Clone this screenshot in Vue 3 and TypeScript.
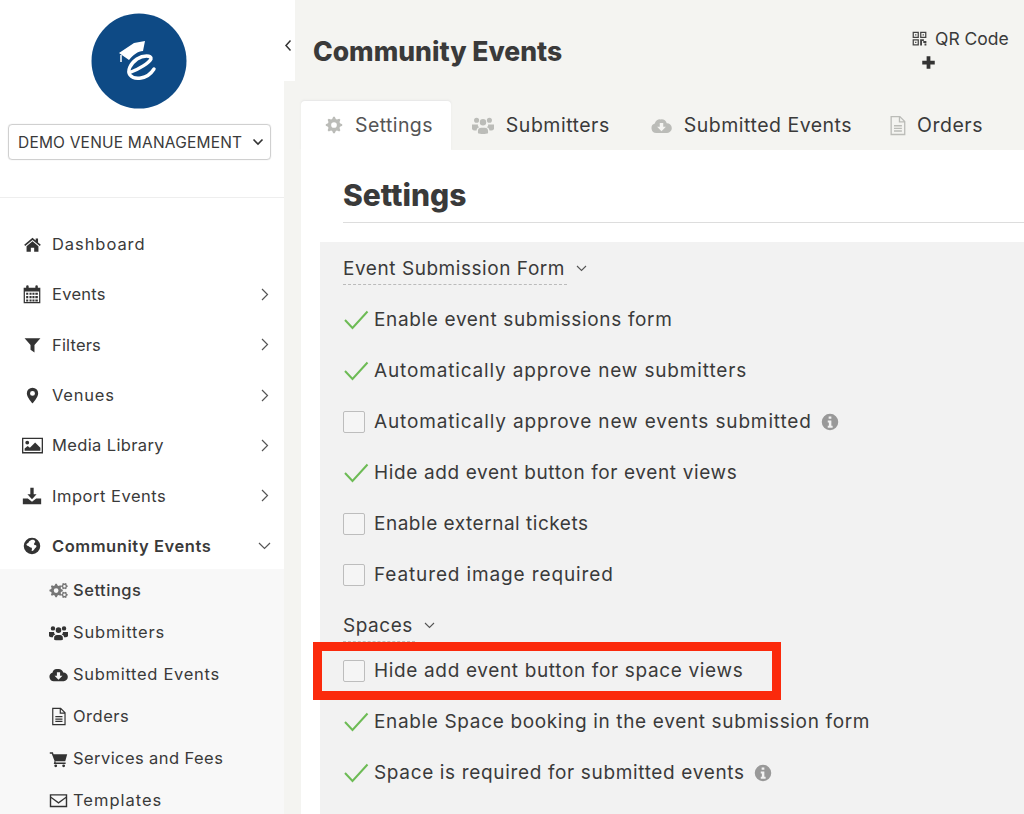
<script setup lang="ts">
function gear(cx: number, cy: number, r: number, hole: number, teeth = 8): string {
  let d = ''
  const n = teeth * 4
  for (let i = 0; i < n; i++) {
    const a = ((i - 0.5) / n) * Math.PI * 2
    const rr = i % 4 < 2 ? r : r * 0.76
    d += `${i ? 'L' : 'M'}${(cx + rr * Math.cos(a)).toFixed(2)} ${(cy + rr * Math.sin(a)).toFixed(2)}`
  }
  d += `ZM${cx - hole} ${cy}a${hole} ${hole} 0 1 0 ${hole * 2} 0a${hole} ${hole} 0 1 0 ${-hole * 2} 0Z`
  return d
}

const icons: Record<string, string> = {
  home: 'M12 3.500 1.500 12.300l1.300 1.500L12 6.200l9.200 7.600 1.300-1.500L19 9.400V4.500h-3v2.400ZM12 8 4.500 14.200V21h5.400v-4.800h4.200V21h5.400v-6.800Z',
  calendar:
    'M2 4.500h3V3a1.500 1.500 0 0 1 3 0v1.500h8V3a1.500 1.500 0 0 1 3 0v1.500h3V23H2ZM3.500 9v12.500h17V9ZM5 10.500h2.500v2.500H5Zm4 0h2.500v2.500H9Zm3.500 0H15v2.500h-2.500Zm3.500 0h3v2.500h-3ZM5 14.500h2.500V17H5Zm4 0h2.500V17H9Zm3.500 0H15V17h-2.500Zm3.500 0h3V17h-3ZM5 18.500h2.500V21H5Zm4 0h2.500V21H9Zm3.500 0H15V21h-2.500Zm3.500 0h3V21h-3Z',
  filter: 'M2 4h20l-7.500 8.500V22l-5-3.500v-6Z',
  pin: 'M12 1a8 8 0 0 0-8 8c0 5.500 8 14 8 14s8-8.500 8-14a8 8 0 0 0-8-8Zm0 4.500a3.500 3.500 0 1 1 0 7 3.500 3.500 0 0 1 0-7Z',
  media:
    'M0 3h24v18H0Zm1.500 1.500v15h21v-15ZM6 6.500a2.200 2.200 0 1 1 0 4.400 2.200 2.200 0 0 1 0-4.400ZM3 18v-2.500l3.500-3 2.500 2 6-6 6 6V18Z',
  import: 'M10 2h4v8h3.500L12 16 6.500 10H10ZM1 15h6l5 4 5-4h6v7H1Z',
  globe:
    'M12 1a11 11 0 1 0 0 22 11 11 0 0 0 0-22Zm-1 3c-1.500 1-3 1.200-3.500 3-.4 1.600-2.400 1-3 3 .4 2 2.400 1.800 3.600 2.600 1.200.9 1.800 1.600 3 1.400 1.500 1 .6 2.800.4 4.500 1.800.6 3.200-1.500 4-3 1-1.500 2.800-2 2.400-4-1-.6-2.400-.4-3-1.500-.8-1.400.6-2.500 1.500-3.500C15.800 3.800 13.200 3.400 11 4Z',
  gears: gear(9, 12, 8.5, 3) + gear(19.5, 6.5, 4.3, 1.6, 6) + gear(19.5, 17.5, 4.3, 1.6, 6),
  cog: gear(12, 12, 11, 3.8, 8),
  users:
    'M12 5.500a3.500 3.500 0 1 1 0 7 3.500 3.500 0 0 1 0-7ZM5 4a2.800 2.800 0 1 1 0 5.600A2.800 2.800 0 0 1 5 4Zm14 0a2.800 2.800 0 1 1 0 5.600A2.800 2.800 0 0 1 19 4ZM0 11.500h6.500c-.4 1.600.4 2.500 1.500 3C5.500 15 5 17 5 18c-3 0-5-.6-5-2Zm24 0h-6.500c.4 1.600-.4 2.500-1.500 3 2.500.5 3 2.500 3 3.500 3 0 5-.6 5-2ZM6.500 21v-2.500c0-2.500 1.500-3.500 3.500-3.500h4c2 0 3.500 1 3.500 3.500V21c-2 1.200-9 1.200-11 0Z',
  cloud:
    'M6 20.500A5.500 5.500 0 0 1 4.300 9.800 6 6 0 0 1 11 5a6.500 6.500 0 0 1 7 4.500 5.500 5.500 0 0 1 .5 11ZM10 9v4.500H7l5 5 5-5h-3V9Z',
  file: 'M4 1h11l6 6v16H4Zm1.500 1.500v19h14V8.500H13.500v-6Zm9.500.6v3.900h3.900ZM8 11.500h9V13H8Zm0 3h9V16H8Zm0 3h9V19H8Z',
  cart: 'M1 4h4l.7 2.500H23l-2.500 9H8L8.500 17H21v2H6l1-4L3.500 6H1ZM8.500 19.500a1.800 1.800 0 1 1 0 3.600 1.800 1.800 0 0 1 0-3.600Zm10 0a1.800 1.800 0 1 1 0 3.600 1.800 1.800 0 0 1 0-3.600Z',
  mail: 'M1 4h22v16.500H1Zm1.800 1.800v1.400L12 14l9.200-6.800V5.800Zm0 3.500v9.400h18.400V9.300L12 16.200Z',
  qr: 'M1 1h10v10H1Zm2 2v6h6V3Zm2 2h2v2H5ZM13 1h10v10H13Zm2 2v6h6V3Zm2 2h2v2h-2ZM1 13h10v10H1Zm2 2v6h6v-6Zm2 2h2v2H5ZM13 13h6v3h4v3h-5v-3h-2v7h-3Zm7 7h3v3h-3Z',
  plus: 'M9 2h6v7h7v6h-7v7H9v-7H2V9h7Z',
  info: 'M12 1a11 11 0 1 0 0 22 11 11 0 0 0 0-22Zm-1.800 3.500h3.600v3.200h-3.600ZM9 10h4.800v7H15.500v2.500h-6.500V17h1.500v-4.500H9Z',
}

interface NavItem {
  label: string
  icon: string
  size: number
  ls: number
  arrow?: boolean
}

const nav: NavItem[] = [
  { label: 'Dashboard', icon: 'home', size: 19, ls: 0.93 },
  { label: 'Events', icon: 'calendar', size: 20, ls: 0.27, arrow: true },
  { label: 'Filters', icon: 'filter', size: 19, ls: 0.17, arrow: true },
  { label: 'Venues', icon: 'pin', size: 17, ls: 0.77, arrow: true },
  { label: 'Media Library', icon: 'media', size: 21, ls: 0.37, arrow: true },
  { label: 'Import Events', icon: 'import', size: 20, ls: 0.52, arrow: true },
]

const sub = [
  { label: 'Settings', icon: 'gears', ls: 0.52, active: true },
  { label: 'Submitters', icon: 'users', ls: 0.85 },
  { label: 'Submitted Events', icon: 'cloud', ls: 0.7 },
  { label: 'Orders', icon: 'file', ls: 0.5 },
  { label: 'Services and Fees', icon: 'cart', ls: 0.42 },
  { label: 'Templates', icon: 'mail', ls: 0.98 },
]

const tabs = [
  { label: 'Settings', icon: 'cog', size: 18, active: true },
  { label: 'Submitters', icon: 'users', size: 22 },
  { label: 'Submitted Events', icon: 'cloud', size: 21 },
  { label: 'Orders', icon: 'file', size: 21 },
]

interface Opt {
  label: string
  on: boolean
  ls: number
  info?: boolean
  mark?: boolean
}

const formOpts: Opt[] = [
  { label: 'Enable event submissions form', on: true, ls: 0.65 },
  { label: 'Automatically approve new submitters', on: true, ls: 0.85 },
  { label: 'Automatically approve new events submitted', on: false, ls: 0.86, info: true },
  { label: 'Hide add event button for event views', on: true, ls: 0.62 },
  { label: 'Enable external tickets', on: false, ls: 0.52 },
  { label: 'Featured image required', on: false, ls: 0.87 },
]

const spaceOpts: Opt[] = [
  { label: 'Hide add event button for space views', on: false, ls: 0.65, mark: true },
  { label: 'Enable Space booking in the event submission form', on: true, ls: 0.65 },
  { label: 'Space is required for submitted events', on: true, ls: 0.65, info: true },
]
</script>

<template>
  <div class="page">
    <aside class="side">
      <div class="logo">
        <svg width="96" height="96" viewBox="0 0 96 96">
          <circle cx="48" cy="48" r="47.5" fill="#0e4a85" />
          <path d="M28 40 43 30 54 28 52 38C47 38 42 42 38 47Z" fill="#fff" />
          <path d="M30 42v7" stroke="#fff" stroke-width="1.500" />
          <path d="M40 59C48 56 58 50 60 46 61 42 52 42 46 46 39 51 36 58 39 62 43 67 56 67 63 56" fill="none" stroke="#fff" stroke-width="3.400" stroke-linecap="round" />
        </svg>
      </div>
      <div class="select">
        <span>DEMO VENUE MANAGEMENT</span>
        <svg width="12" height="8" viewBox="0 0 12 8"><path d="M1.500 1.500 6 6l4.500-4.500" fill="none" stroke="#333" stroke-width="1.600" /></svg>
      </div>
      <div class="divider"></div>
      <nav class="nav">
        <div v-for="n in nav" :key="n.label" class="nav-item">
          <span class="nav-ico">
            <svg :width="n.size" :height="n.size" viewBox="0 0 24 24"><path :d="icons[n.icon]" fill="#333" fill-rule="evenodd" /></svg>
          </span>
          <span class="nav-label" :style="{ letterSpacing: n.ls + 'px' }">{{ n.label }}</span>
          <svg v-if="n.arrow" class="arrow" width="8" height="13" viewBox="0 0 8 13"><path d="M1 1l5.500 5.500L1 12" fill="none" stroke="#555" stroke-width="1.200" /></svg>
        </div>
        <div class="nav-item current">
          <span class="nav-ico">
            <svg width="18" height="18" viewBox="0 0 24 24"><path :d="icons.globe" fill="#333" fill-rule="evenodd" /></svg>
          </span>
          <span class="nav-label">Community Events</span>
          <svg class="arrow down" width="13" height="8" viewBox="0 0 13 8"><path d="M1 1l5.500 5.500L12 1" fill="none" stroke="#555" stroke-width="1.200" /></svg>
        </div>
        <div class="sub">
          <div v-for="s in sub" :key="s.label" class="sub-item" :class="{ active: s.active }">
            <span class="sub-ico">
              <svg width="19" height="19" viewBox="0 0 24 24"><path :d="icons[s.icon]" :fill="s.active ? '#777' : '#333'" fill-rule="evenodd" /></svg>
            </span>
            <span class="sub-label" :style="{ letterSpacing: s.ls + 'px' }">{{ s.label }}</span>
          </div>
        </div>
      </nav>
    </aside>

    <main class="main">
      <div class="collapse">
        <svg width="8" height="13" viewBox="0 0 8 13"><path d="M6.500 1.500 2 6.500l4.500 5" fill="none" stroke="#333" stroke-width="1.500" /></svg>
      </div>
      <div class="inner">
        <header class="head">
          <h1>Community Events</h1>
          <div class="head-tools">
            <div class="qr">
              <svg width="15" height="15" viewBox="0 0 24 24"><path :d="icons.qr" fill="#444" fill-rule="evenodd" /></svg>
              <span>QR Code</span>
              <i class="tool-sep"></i>
            </div>
            <svg class="plus" width="15" height="15" viewBox="0 0 24 24"><path :d="icons.plus" fill="#333" /></svg>
          </div>
        </header>

        <div class="tabs">
          <div v-for="t in tabs" :key="t.label" class="tab" :class="{ active: t.active }">
            <svg :width="t.size" :height="t.size" viewBox="0 0 24 24"><path :d="icons[t.icon]" fill="#bbbcb8" fill-rule="evenodd" /></svg>
            <span>{{ t.label }}</span>
          </div>
        </div>

        <section class="content">
          <h2>Settings</h2>
          <div class="panel">
            <div class="group first">
              <span class="group-title">Event Submission Form</span>
              <svg width="11" height="7" viewBox="0 0 11 7"><path d="M1 1l4.500 4.500L10 1" fill="none" stroke="#555" stroke-width="1.100" /></svg>
            </div>
            <div v-for="o in formOpts" :key="o.label" class="opt">
              <svg v-if="o.on" class="check" width="26" height="20" viewBox="0 0 26 20"><path d="M2 10l7.500 8L24.500 1.500" fill="none" stroke="#6dbb55" stroke-width="2" /></svg>
              <span v-else class="box"></span>
              <span :style="{ letterSpacing: o.ls + 'px' }">{{ o.label }}</span>
              <svg v-if="o.info" class="info" width="18" height="18" viewBox="0 0 24 24"><path :d="icons.info" fill="#999" fill-rule="evenodd" /></svg>
            </div>
            <div class="group second">
              <span class="group-title">Spaces</span>
              <svg width="11" height="7" viewBox="0 0 11 7"><path d="M1 1l4.500 4.500L10 1" fill="none" stroke="#555" stroke-width="1.100" /></svg>
            </div>
            <div v-for="o in spaceOpts" :key="o.label" class="opt" :class="{ marked: o.mark }">
              <svg v-if="o.on" class="check" width="26" height="20" viewBox="0 0 26 20"><path d="M2 10l7.500 8L24.500 1.500" fill="none" stroke="#6dbb55" stroke-width="2" /></svg>
              <span v-else class="box"></span>
              <span :style="{ letterSpacing: o.ls + 'px' }">{{ o.label }}</span>
              <svg v-if="o.info" class="info" width="18" height="18" viewBox="0 0 24 24"><path :d="icons.info" fill="#999" fill-rule="evenodd" /></svg>
            </div>
          </div>
        </section>
      </div>
    </main>
  </div>
</template>

<style>
html,
body {
  margin: 0;
  background: #fff;
}
</style>

<style scoped>
.page {
  width: 1024px;
  height: 814px;
  overflow: hidden;
  display: flex;
  font-family: Inter, "Noto Sans", sans-serif;
  color: #3a3a3a;
  background: #f4f4f1;
}
.side {
  width: 284px;
  flex: none;
  background: #fff;
  display: flex;
  flex-direction: column;
}
.logo {
  display: flex;
  justify-content: center;
  padding-top: 13px;
  margin-left: -6px;
  height: 124px;
  flex: none;
  box-sizing: border-box;
}
.select {
  margin-left: 8px;
  width: 263px;
  height: 36px;
  flex: none;
  box-sizing: border-box;
  border: 1px solid #d0d0d0;
  border-radius: 4px;
  box-shadow: 0 0 1px #ccc;
  padding: 0 6px 0 9px;
  display: flex;
  align-items: center;
  justify-content: space-between;
  font-size: 15.5px;
  letter-spacing: 0.2px;
  white-space: nowrap;
}
.divider {
  margin-top: 37px;
  flex: none;
  border-top: 1px solid #eeeeee;
}
.nav {
  padding-top: 21px;
  flex: none;
}
.nav-item {
  height: 50.33px;
  display: flex;
  align-items: center;
  font-size: 16.5px;
  position: relative;
}
.nav-ico {
  width: 22px;
  margin-left: 21px;
  margin-right: 9px;
  display: flex;
  justify-content: center;
}
.nav-label {
  flex: 1;
}
.arrow {
  margin-right: 15px;
}
.arrow.down {
  margin-right: 13px;
}
.current .nav-label {
  font-weight: 600;
  letter-spacing: 0.55px;
}
.sub {
  margin-top: -2px;
  background: #f8f8f8;
  height: 260px;
}
.sub-item {
  height: 42px;
  display: flex;
  align-items: center;
  font-size: 16.5px;
}
.sub-item.active {
  font-weight: 500;
}
.sub-ico {
  width: 20px;
  margin-left: 48px;
  margin-right: 5px;
  display: flex;
  justify-content: center;
}
.main {
  flex: 1;
  min-width: 0;
  position: relative;
  padding-left: 11px;
}
.collapse {
  position: absolute;
  left: 0;
  top: 0;
  width: 11px;
  height: 81px;
  background: #fff;
  box-sizing: border-box;
  padding-top: 36px;
}
.inner {
  padding-left: 6px;
  height: 100%;
  display: flex;
  flex-direction: column;
}
.head {
  height: 101px;
  flex: none;
  position: relative;
  display: flex;
}
.head h1 {
  margin: 35px 0 0 12px;
  font-size: 26.5px;
  line-height: 32px;
  font-weight: 800;
  color: #3a3a3a;
}
.head-tools {
  position: absolute;
  left: 611px;
  top: 28px;
  width: 130px;
}
.qr {
  display: flex;
  align-items: center;
  gap: 8px;
  font-size: 17.5px;
  white-space: nowrap;
  height: 20px;
}
.tool-sep {
  width: 2px;
  height: 16px;
  margin-left: 7px;
  background: #c8c8c6;
}
.plus {
  display: block;
  margin: 7px 0 0 9px;
}
.tabs {
  flex: none;
  height: 49px;
  display: flex;
}
.tab {
  display: flex;
  align-items: center;
  gap: 12px;
  font-size: 19.5px;
  letter-spacing: 0.5px;
  padding: 0 20px 1px 21px;
  white-space: nowrap;
  height: 49px;
  box-sizing: border-box;
}
.tab:last-child {
  margin-left: -6px;
  gap: 9px;
}
.tab.active {
  padding-left: 24px;
  padding-right: 18px;
  background: #fff;
  border-radius: 4px 4px 0 0;
  color: #555;
  letter-spacing: 0.4px;
  box-shadow: 0 -1px 2px #e6e6e6;
}
.content {
  flex: 1;
  background: #fff;
  padding: 0 0 0 19px;
}
.content h2 {
  margin: 0 0 19px 23px;
  height: 73px;
  line-height: 90px;
  box-sizing: border-box;
  font-size: 30px;
  font-weight: 800;
  border-bottom: 1px solid #dddddd;
}
.panel {
  background: #f2f2f2;
  padding-left: 23px;
  height: 600px;
  font-size: 19px;
}
.group {
  display: flex;
  align-items: center;
  gap: 11px;
}
.group.first {
  height: 52px;
}
.group.second {
  height: 51px;
}
.group-title {
  position: relative;
  letter-spacing: 0.55px;
}
.group-title::after {
  content: "";
  position: absolute;
  left: 0;
  right: -2px;
  bottom: -5px;
  border-bottom: 1px dashed #bbb;
}
.opt {
  height: 51px;
  display: flex;
  align-items: center;
  white-space: nowrap;
  position: relative;
}
.check {
  width: 26px;
  flex: none;
  margin-right: 5px;
}
.box {
  width: 22px;
  height: 22px;
  box-sizing: border-box;
  flex: none;
  margin-right: 9px;
  border: 1px solid #bdbdbd;
  border-radius: 2px;
  background: #f5f5f5;
}
.info {
  margin-left: 9px;
}
.marked {
  height: 39px;
  margin-bottom: 6px;
}
.marked::after {
  content: "";
  position: absolute;
  left: -30px;
  top: -9px;
  width: 468px;
  height: 58px;
  box-sizing: border-box;
  border: 9px solid #fb2a0c;
}
</style>
